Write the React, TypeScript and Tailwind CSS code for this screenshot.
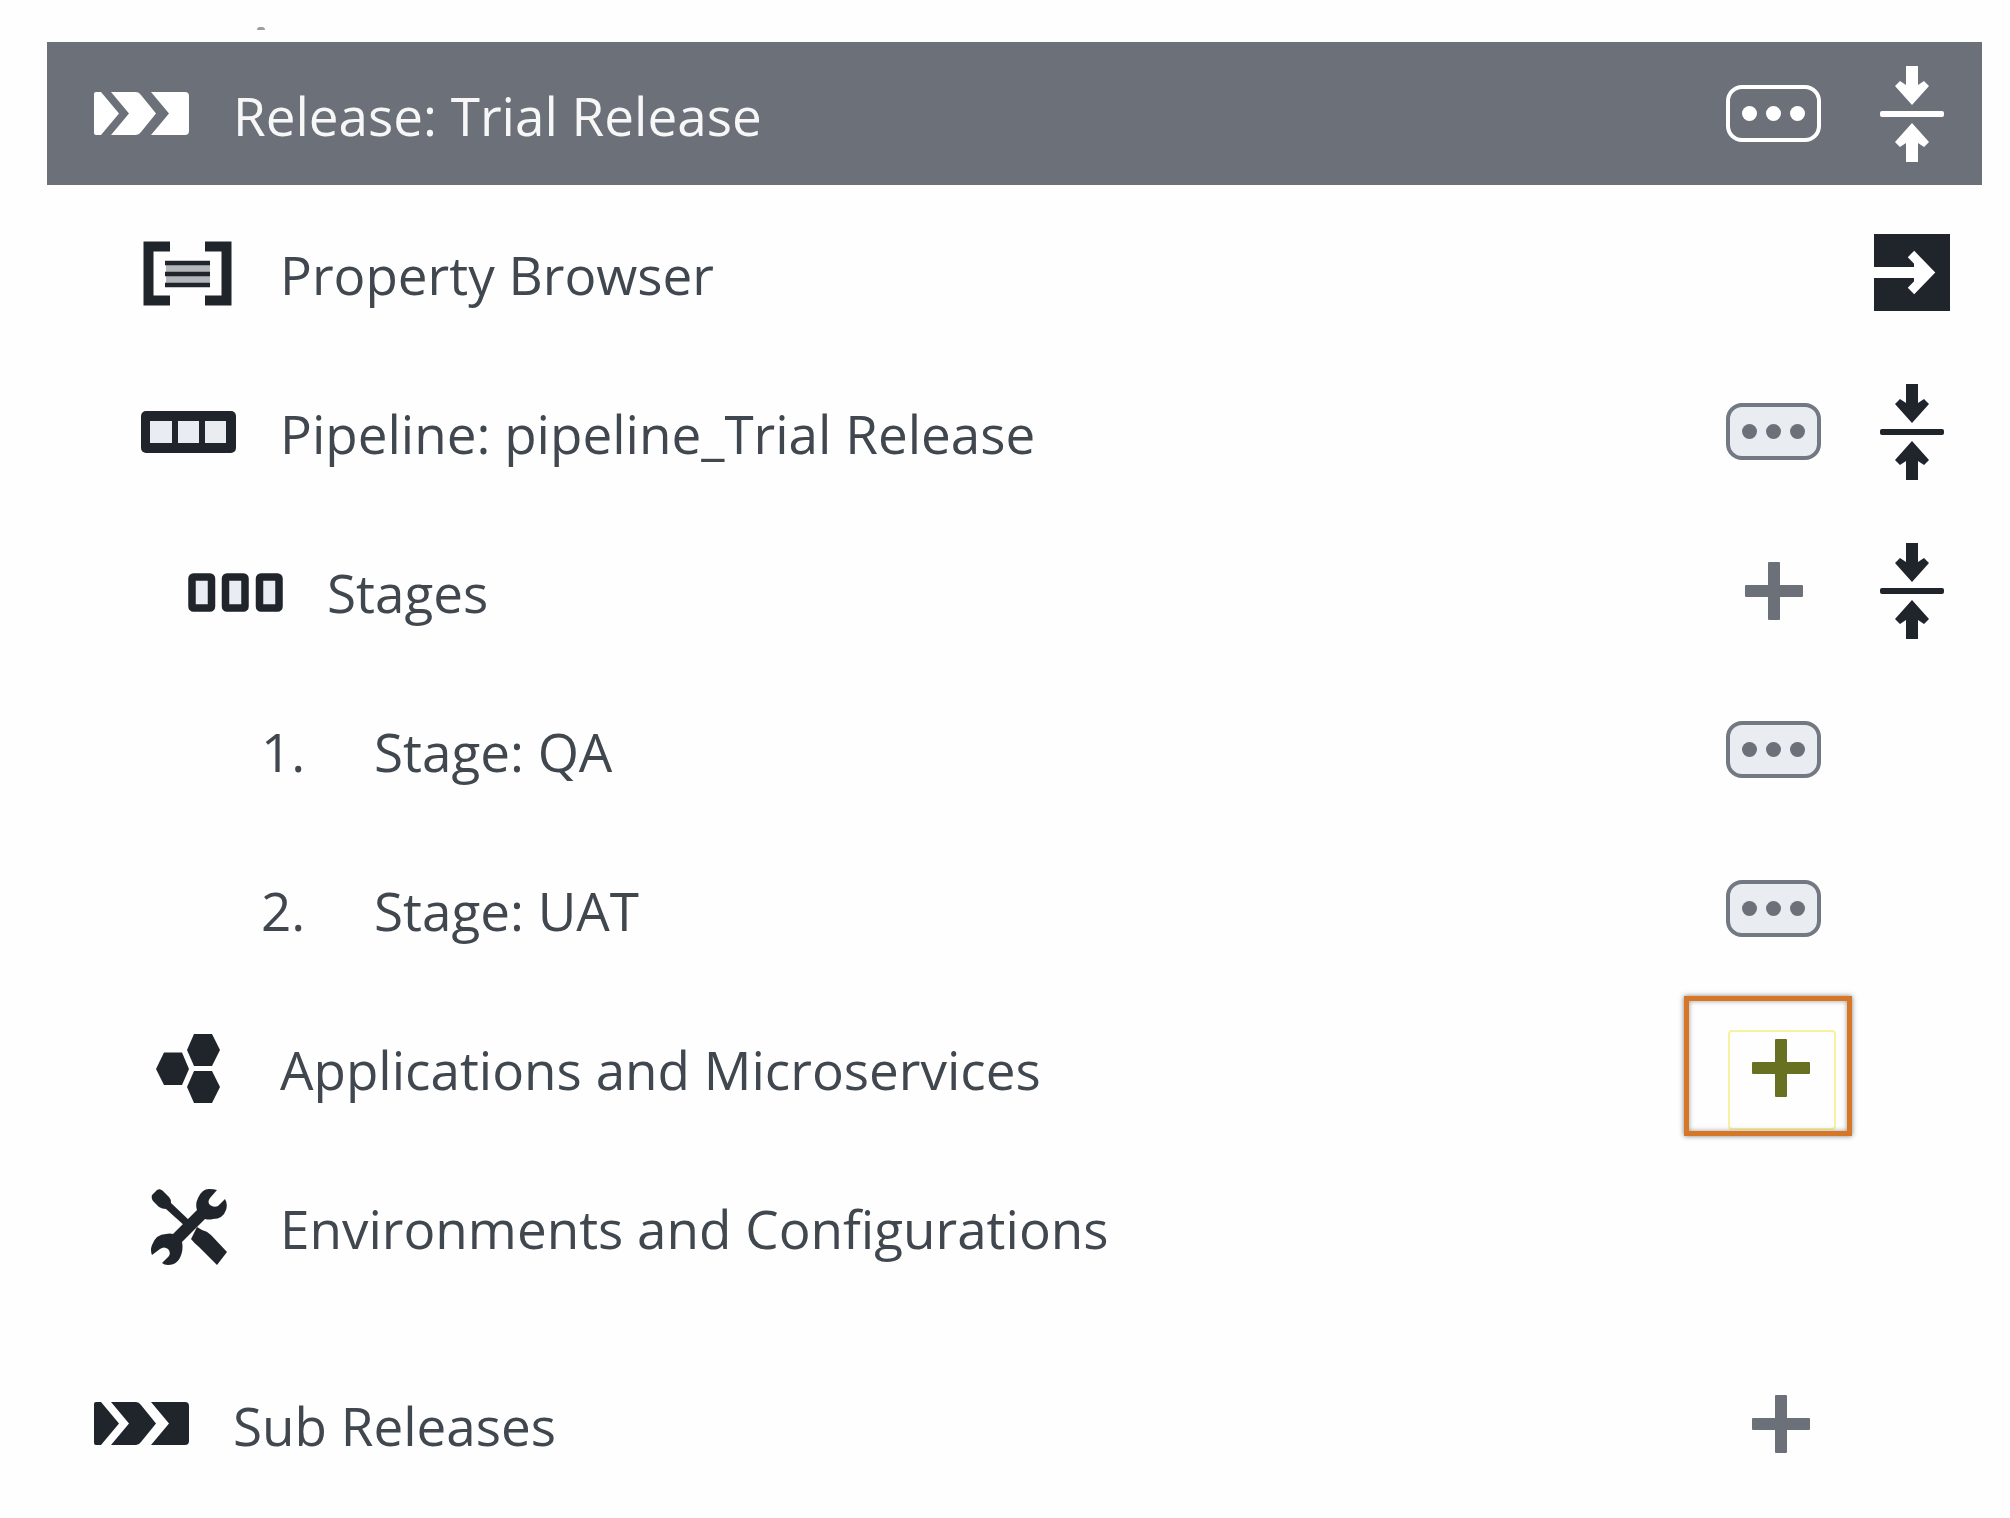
import type { ReactNode } from "react";

function ReleaseIcon() {
  return (
    <svg viewBox="0 0 95 43" className="h-[43px] w-[95px]" fill="currentColor" aria-hidden="true">
      <path d="M2 0H7L25 21.500L7 43H2Q0 43 0 41V2Q0 0 2 0Z" />
      <path d="M17 0H42Q45 0 47 3L62 21.500L47 40Q45 43 42 43H17L35 21.500Z" />
      <path d="M57 0H91Q95 0 95 4V39Q95 43 91 43H57L75 21.500Z" />
    </svg>
  );
}

function PropertyIcon() {
  return (
    <svg viewBox="0 0 91 67" className="h-[67px] w-[91px]" aria-hidden="true">
      <rect x="23" y="23" width="44" height="24" fill="#b3b7bc" />
      <path
        d="M27 7.500H5.500V61.500H27M62 7.500H83.500V61.500H62"
        fill="none"
        stroke="currentColor"
        strokeWidth="10"
      />
      <path d="M22 24H67M22 35H67M22 46H67" stroke="currentColor" strokeWidth="4.500" />
    </svg>
  );
}

function PipelineIcon() {
  return (
    <svg viewBox="0 0 95 42" className="h-[42px] w-[95px]" aria-hidden="true">
      <rect width="95" height="42" rx="5" fill="currentColor" />
      <g fill="#e9edf1">
        <rect x="9" y="10" width="22" height="22" />
        <rect x="37" y="10" width="21" height="22" />
        <rect x="64" y="10" width="21" height="22" />
      </g>
    </svg>
  );
}

function StagesIcon() {
  return (
    <svg viewBox="0 0 95 43" className="h-[43px] w-[95px]" aria-hidden="true">
      <g fill="#e9edf1" stroke="currentColor" strokeWidth="7.500">
        <rect x="4" y="8" width="19.500" height="31" rx="1.500" />
        <rect x="37.500" y="8" width="19.500" height="31" rx="1.500" />
        <rect x="71.500" y="8" width="19.500" height="31" rx="1.500" />
      </g>
    </svg>
  );
}

function HexagonsIcon() {
  return (
    <svg viewBox="0 0 66 71" className="h-[71px] w-[66px]" fill="currentColor" aria-hidden="true">
      <path d="M8 20.500H26L33 37L26 53H8L0 37Z" />
      <path d="M38 2H56L64 18L56 34H38L31 18Z" />
      <path d="M38 39H56L64 55L56 71H38L31 55Z" />
    </svg>
  );
}

function ToolsIcon() {
  return (
    <svg viewBox="0 0 76 76" className="size-[76px]" fill="currentColor" aria-hidden="true">
      <path d="M58 0Q63 0 66 1L59 9Q56 13 59 16Q63 19 67 17L74 10Q77 15 75 21Q72 30 62 30Q58 31 54 30L31 53Q32 58 31 63Q28 76 17 76Q13 76 11 74L18 67Q20 63 17 60Q13 57 9 60L1 66Q-1 61 1 56Q5 45 15 45Q19 44 22 45L46 21Q44 15 47 9Q51 0 58 0Z" />
      <path d="M6 1Q9 -1 12 2L18 8Q20 10 20 14L40 33L35 38L15 20Q11 20 8 18L2 12Q0 9 1 6Z" />
      <path d="M40 50L46 38L51 41Q56 42 60 46L76 63L66 76L48 58Q43 54 40 50Z" />
    </svg>
  );
}

function CollapseIcon() {
  return (
    <svg viewBox="0 0 64 96" className="h-[96px] w-[64px]" fill="currentColor" aria-hidden="true">
      <path d="M26 0H38V19L44 15L49 20L32 39L15 20L20 15L26 19Z" />
      <rect y="45" width="64" height="6" rx="2" />
      <path d="M26 96H38V77L44 81L49 76L32 57L15 76L20 81L26 77Z" />
    </svg>
  );
}

function OpenIcon() {
  return (
    <svg viewBox="0 0 76 77" className="h-[77px] w-[76px]" aria-hidden="true">
      <rect width="76" height="77" fill="currentColor" />
      <path d="M0 38.500H50" stroke="#fff" strokeWidth="11" />
      <path d="M37 20L55 38.500L37 57" fill="none" stroke="#fff" strokeWidth="9" />
      <path d="M40 28V49L52 38.500Z" fill="#fff" />
    </svg>
  );
}

function PlusIcon() {
  return (
    <svg viewBox="0 0 58 58" className="size-[58px]" fill="currentColor" aria-hidden="true">
      <rect x="23" width="12" height="58" rx="1" />
      <rect y="23" width="58" height="12" rx="1" />
    </svg>
  );
}

function MoreButton({ label, inverted = false }: { label: string; inverted?: boolean }) {
  return (
    <button
      type="button"
      aria-label={label}
      className={
        inverted
          ? "flex h-[57px] w-[95px] items-center justify-center gap-[9px] rounded-2xl border-4 border-white text-white"
          : "flex h-[57px] w-[95px] items-center justify-center gap-[9px] rounded-2xl border-4 border-[#737982] bg-[#e9edf1] text-[#6b7079]"
      }
    >
      <span className="size-[15px] rounded-full bg-current" />
      <span className="size-[15px] rounded-full bg-current" />
      <span className="size-[15px] rounded-full bg-current" />
    </button>
  );
}

function AddButton({ label, wide = false }: { label: string; wide?: boolean }) {
  return (
    <button
      type="button"
      aria-label={label}
      className={
        wide
          ? "flex h-[76px] w-[109px] items-center justify-center text-[#6b7079]"
          : "flex h-[76px] w-[95px] items-center justify-center text-[#6b7079]"
      }
    >
      <PlusIcon />
    </button>
  );
}

function HighlightedAddButton({ label }: { label: string }) {
  return (
    <button
      type="button"
      aria-label={label}
      className="relative flex h-[76px] w-[109px] items-center justify-center text-[#687021]"
    >
      <PlusIcon />
      <span className="absolute top-0 left-[2px] h-[100px] w-[108px] rounded-sm border-2 border-[#f8f1a0]" />
      <span className="absolute -top-[34px] -left-[42px] h-[140px] w-[168px] border-[5px] border-[#d67728] shadow-[0_0_5px_rgba(0,0,0,0.5),inset_0_0_5px_rgba(0,0,0,0.4)]" />
    </button>
  );
}

function CollapseButton({ label }: { label: string }) {
  return (
    <button type="button" aria-label={label}>
      <CollapseIcon />
    </button>
  );
}

type RowProps = {
  icon: ReactNode;
  label: string;
  indent: string;
  action?: ReactNode;
  toggle?: ReactNode;
};

function RowContent({ icon, label, indent, action, toggle }: RowProps) {
  return (
    <>
      <span className={`${indent} flex min-w-0 flex-1 items-center`}>
        <span className="flex w-[95px] shrink-0 justify-center">{icon}</span>
        <span className="pt-1 pl-[44px] whitespace-nowrap text-(--label)">{label}</span>
      </span>
      <span className="flex w-[116px] shrink-0">{action}</span>
      <span className="flex w-[140px] shrink-0 justify-center">{toggle}</span>
    </>
  );
}

function Row(props: RowProps) {
  return (
    <li className="flex h-[159px] items-center">
      <RowContent {...props} />
    </li>
  );
}

function StageNumber({ value }: { value: number }) {
  return <span className="w-full pt-1 pl-[26px] text-(--label)">{value}.</span>;
}

export default function App() {
  return (
    <main className="min-h-screen bg-[#fefefe] pr-7 pb-3 pl-[47px] font-['Open_Sans','Noto_Sans',sans-serif] text-[53px] leading-[76px] text-[#20252c] [--label:#41474e]">
      <div className="flex h-[42px] items-start pt-[27px] pl-[210px]" aria-hidden="true">
        <span className="h-[3px] w-2 rounded-t-full bg-[#9a9da1]" />
      </div>
      <header className="mb-2 flex h-[143px] items-center bg-[#6b7079] text-white [--label:#f7f7f8]">
        <RowContent
          icon={<ReleaseIcon />}
          label="Release: Trial Release"
          indent="pl-[47px]"
          action={<MoreButton inverted label="Release actions" />}
          toggle={<CollapseButton label="Collapse release" />}
        />
      </header>
      <ul>
        <Row
          icon={<PropertyIcon />}
          label="Property Browser"
          indent="pl-[94px]"
          toggle={
            <button type="button" aria-label="Open property browser">
              <OpenIcon />
            </button>
          }
        />
        <Row
          icon={<PipelineIcon />}
          label="Pipeline: pipeline_Trial Release"
          indent="pl-[94px]"
          action={<MoreButton label="Pipeline actions" />}
          toggle={<CollapseButton label="Collapse pipeline" />}
        />
        <Row
          icon={<StagesIcon />}
          label="Stages"
          indent="pl-[141px]"
          action={<AddButton label="Add stage" />}
          toggle={<CollapseButton label="Collapse stages" />}
        />
        <Row
          icon={<StageNumber value={1} />}
          label="Stage: QA"
          indent="pl-[188px]"
          action={<MoreButton label="QA stage actions" />}
        />
        <Row
          icon={<StageNumber value={2} />}
          label="Stage: UAT"
          indent="pl-[188px]"
          action={<MoreButton label="UAT stage actions" />}
        />
        <Row
          icon={<HexagonsIcon />}
          label="Applications and Microservices"
          indent="pl-[94px]"
          action={<HighlightedAddButton label="Add application or microservice" />}
        />
        <Row icon={<ToolsIcon />} label="Environments and Configurations" indent="pl-[94px]" />
      </ul>
      <ul className="pt-[38px]">
        <Row
          icon={<ReleaseIcon />}
          label="Sub Releases"
          indent="pl-[47px]"
          action={<AddButton wide label="Add sub release" />}
        />
      </ul>
    </main>
  );
}
